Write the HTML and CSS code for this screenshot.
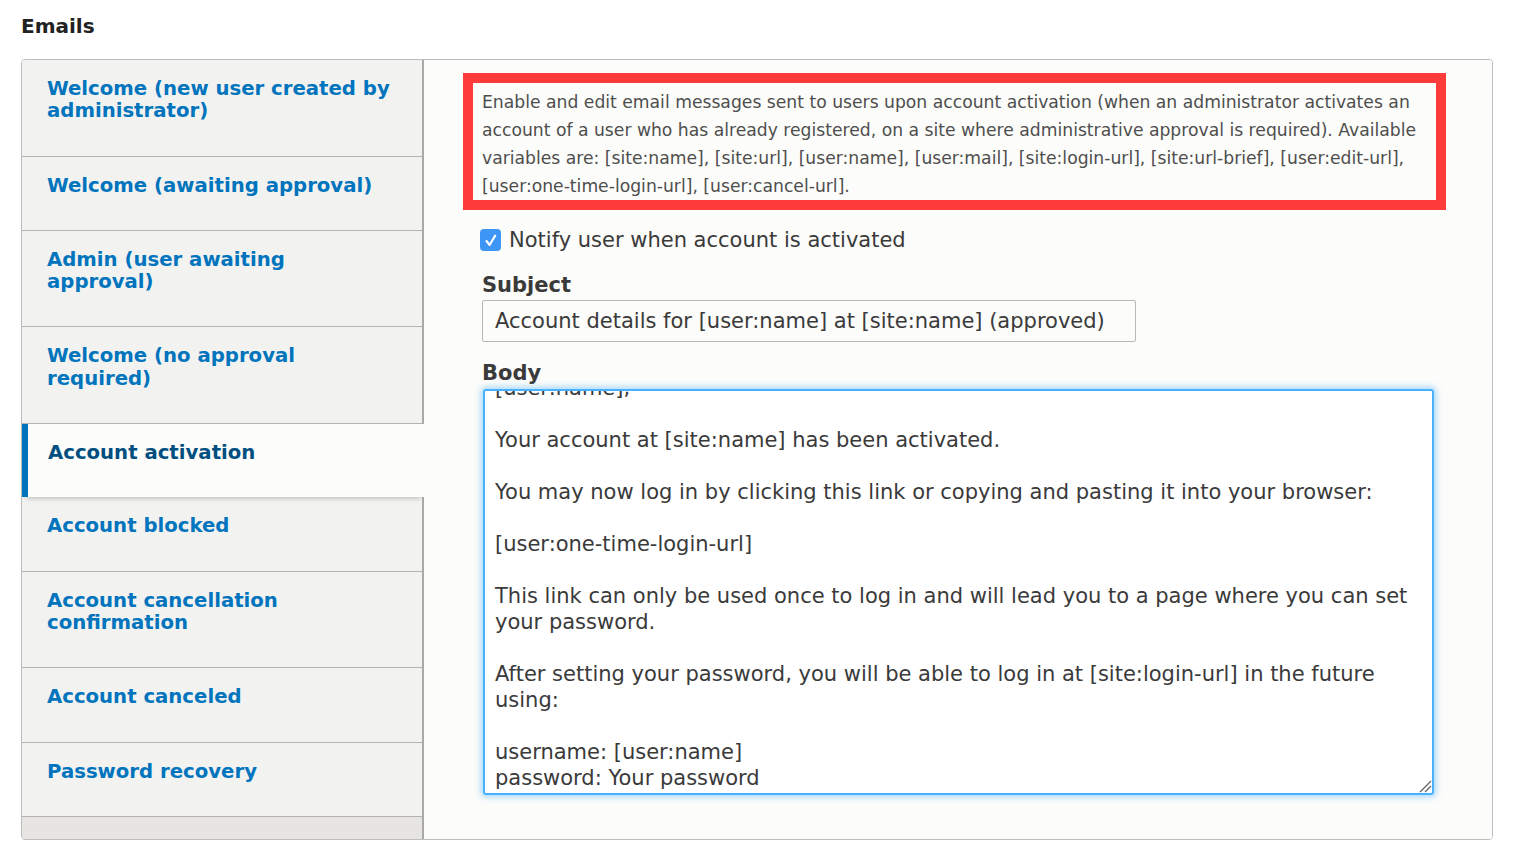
FILE: index.html
```html
<!DOCTYPE html>
<html lang="en">
<head>
<meta charset="utf-8">
<title>Emails</title>
<link rel="stylesheet" href="styles.css">
</head>
<body>
<div class="page">
  <h2 class="title">Emails</h2>
  <div class="vtabs">
    <ul class="menu">
      <li class="item"><a href="#">Welcome (new user created by administrator)</a></li>
      <li class="item"><a href="#">Welcome (awaiting approval)</a></li>
      <li class="item"><a href="#">Admin (user awaiting approval)</a></li>
      <li class="item"><a href="#">Welcome (no approval required)</a></li>
      <li class="item selected"><a href="#">Account activation</a></li>
      <li class="item"><a href="#">Account blocked</a></li>
      <li class="item"><a href="#">Account cancellation confirmation</a></li>
      <li class="item"><a href="#">Account canceled</a></li>
      <li class="item"><a href="#">Password recovery</a></li>
    </ul>
    <div class="pane">
      <div class="desc">Enable and edit email messages sent to users upon account activation (when an administrator activates an account of a user who has already registered, on a site where administrative approval is required). Available variables are: [site:name], [site:url], [user:name], [user:mail], [site:login-url], [site:url-brief], [user:edit-url], [user:one-time-login-url], [user:cancel-url].</div>
      <label class="check">
        <span class="box"><svg width="20" height="21" viewBox="0 0 20 21"><path d="M5.5 11 L8.6 15 L14.2 5.6" fill="none" stroke="#fff" stroke-width="2.1" stroke-linecap="round" stroke-linejoin="round"/></svg></span>
        <span>Notify user when account is activated</span>
      </label>
      <div class="label">Subject</div>
      <div class="input">Account details for [user:name] at [site:name] (approved)</div>
      <div class="label body-label">Body</div>
      <div class="textarea">
        <div class="ta-content">[user:name],

Your account at [site:name] has been activated.

You may now log in by clicking this link or copying and pasting it into your browser:

[user:one-time-login-url]

This link can only be used once to log in and will lead you to a page where you can set your password.

After setting your password, you will be able to log in at [site:login-url] in the future using:

username: [user:name]
password: Your password

--  [site:name] team</div>
        <svg class="grip" width="14" height="14" viewBox="0 0 14 14"><path d="M2 13 L13 2 M7 13 L13 7" stroke="#666" stroke-width="1.3"/></svg>
      </div>
    </div>
  </div>
</div>
</body>
</html>
```
FILE: styles.css
```css
* { box-sizing: border-box; }
html, body { margin: 0; padding: 0; background: #fff; }
body {
  font-family: "DejaVu Sans", Verdana, sans-serif;
  color: #333;
}
.page {
  padding: 14px 21px 0 21px;
}
.title {
  margin: 0;
  font-size: 20px;
  line-height: 24px;
  font-weight: bold;
  color: #222;
}
.vtabs {
  margin-top: 21px;
  display: flex;
  width: 1472px;
  height: 781px;
  border: 1px solid #bdbdbb;
  border-radius: 4px;
  overflow: hidden;
}
.menu {
  list-style: none;
  margin: 0;
  padding: 0;
  width: 402px;
  flex: none;
  background: #e6e5e1;
  border-right: 2px solid #a9a9a7;
  position: relative;
  z-index: 1;
}
.item {
  background: #f2f2f0;
  border-bottom: 1px solid #b3b3b1;
}
.item a {
  display: block;
  padding: 18px 28px 33px 25px;
  font-size: 19.7px;
  line-height: 22.3px;
  font-weight: bold;
  color: #0074bd;
  text-decoration: none;
}
.item.selected {
  background: #fcfcfa;
  border-left: 6px solid #0074bd;
  margin-right: -3px;
  border-bottom: 0;
  box-shadow: 0 5px 5px -4px rgba(0,0,0,0.25);
  position: relative;
}
.item.selected a {
  padding-left: 20px;
  padding-bottom: 33px;
  color: #004f80;
}
.pane {
  flex: 1;
  background: #fcfcfa;
  padding: 13px 58px 0 58px;
}
.desc {
  margin: 0 -12px 0 -19px;
  border: 10px solid #fd3b3b;
  padding: 5px 8px 0 9px;
  font-size: 17.2px;
  line-height: 28px;
  color: #4e4e4e;
}
.check {
  display: flex;
  align-items: center;
  margin-top: 17px;
  font-size: 21px;
  line-height: 26px;
  color: #3a3a3a;
}
.box {
  width: 21px;
  height: 22px;
  border-radius: 4px;
  background: #3d96f6;
  margin-left: -2px;
  margin-right: 8px;
  display: flex;
  align-items: center;
  justify-content: center;
}
.box svg { display: block; }
.label {
  margin-top: 19px;
  font-size: 21px;
  line-height: 26px;
  font-weight: bold;
  color: #3a3a3a;
}
.input {
  margin-top: 2px;
  width: 654px;
  height: 42px;
  border: 1px solid #b8b8b6;
  border-radius: 2px;
  background: #fcfcfa;
  padding: 7px 12px;
  font-size: 21px;
  line-height: 26px;
  color: #3a3a3a;
}
.body-label { margin-top: 18px; }
.textarea {
  position: relative;
  margin-top: 3px;
  margin-left: 1px;
  width: 951px;
  height: 406px;
  border: 2px solid #48b2fd;
  border-radius: 3px;
  background: #fff;
  box-shadow: 0 0 6px 2px rgba(80,180,255,0.5);
  overflow: hidden;
  padding: 0 11px 0 10px;
}
.ta-content {
  margin-top: -16px;
  white-space: pre-wrap;
  font-size: 21px;
  line-height: 26px;
  color: #3a3a3a;
}
.grip {
  position: absolute;
  right: 0;
  bottom: 0;
}
```
